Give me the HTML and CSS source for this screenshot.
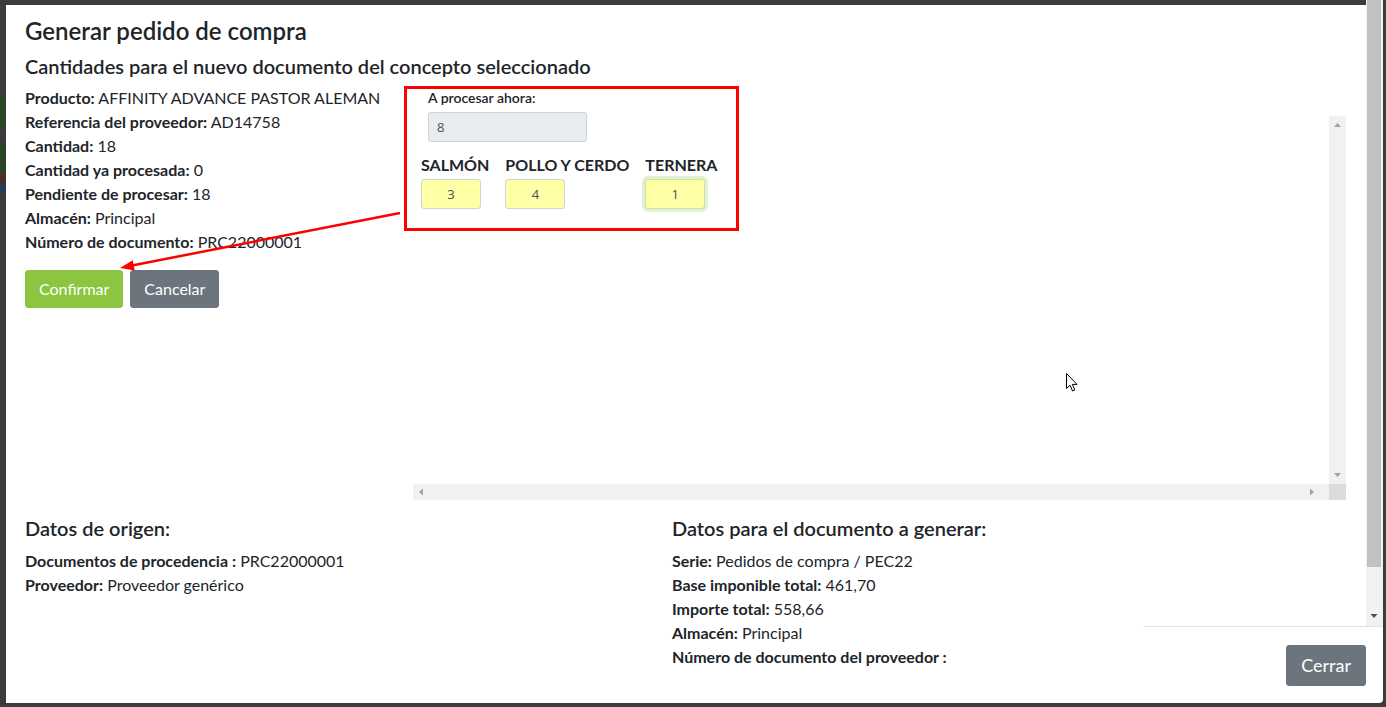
FILE: index.html
```html
<!DOCTYPE html>
<html lang="es">
<head>
    <meta charset="UTF-8">
    <title>Generar pedido de compra</title>
    <link rel="stylesheet" href="styles.css">
</head>
<body>
    <div class="backdrop-left">
        <div class="bd-block bd-green"></div>
        <div class="bd-block bd-green2"></div>
        <div class="bd-block bd-red"></div>
        <div class="bd-block bd-blue"></div>
    </div>

    <div class="modal">
        <div class="modal-body">
            <h4 class="modal-title">Generar pedido de compra</h4>
            <h5 class="section-title">Cantidades para el nuevo documento del concepto seleccionado</h5>

            <div class="top">
                <div class="info">
                    <p><strong>Producto:</strong> AFFINITY ADVANCE PASTOR ALEMAN</p>
                    <p><strong>Referencia del proveedor:</strong> AD14758</p>
                    <p><strong>Cantidad:</strong> 18</p>
                    <p><strong>Cantidad ya procesada:</strong> 0</p>
                    <p><strong>Pendiente de procesar:</strong> 18</p>
                    <p><strong>Almacén:</strong> Principal</p>
                    <p><strong>Número de documento:</strong> PRC22000001</p>

                    <div class="actions">
                        <button class="btn btn-confirm">Confirmar</button>
                        <button class="btn btn-cancel">Cancelar</button>
                    </div>
                </div>

                <div class="preview">
                    <div class="frame">
                        <div class="frame-view"></div>
                        <div class="frame-vbar">
                            <svg width="17" height="17" viewBox="0 0 17 17"><polygon points="5,11 12,11 8.5,7" fill="#a3a3a3"/></svg>
                            <svg width="17" height="17" viewBox="0 0 17 17"><polygon points="5,6 12,6 8.5,10" fill="#a3a3a3"/></svg>
                        </div>
                        <div class="frame-hbar">
                            <svg width="17" height="16" viewBox="0 0 17 16"><polygon points="10,4.5 10,11.5 6,8" fill="#a3a3a3"/></svg>
                            <svg width="17" height="16" viewBox="0 0 17 16"><polygon points="7,4.5 7,11.5 11,8" fill="#a3a3a3"/></svg>
                        </div>
                        <div class="frame-corner"></div>
                    </div>

                    <div class="mark-box">
                        <div class="now-group">
                            <label class="now-label">A procesar ahora:</label>
                            <input class="field field-readonly" type="text" value="8" readonly>
                        </div>
                        <div class="qty-row">
                            <div class="qty">
                                <span class="qty-label">SALMÓN</span>
                                <input class="field field-qty" type="text" value="3">
                            </div>
                            <div class="qty">
                                <span class="qty-label">POLLO Y CERDO</span>
                                <input class="field field-qty" type="text" value="4">
                            </div>
                            <div class="qty">
                                <span class="qty-label">TERNERA</span>
                                <input class="field field-qty field-focus" type="text" value="1">
                            </div>
                        </div>
                    </div>

                    <svg class="cursor" width="14" height="21" viewBox="0 0 14 21">
                        <path d="M1.5 1.5 L1.5 16.5 L5 13.2 L7.6 19 L9.8 18 L7.3 12.4 L12 12.4 Z" fill="#fff" stroke="#000" stroke-width="1" stroke-linejoin="round"/>
                    </svg>
                </div>

                <svg class="mark-arrow" width="300" height="80" viewBox="0 0 300 80">
                    <line x1="290" y1="13" x2="22" y2="65.5" stroke="#f00" stroke-width="2.5"/>
                    <polygon points="10,68 24.7,70.5 22.7,60.2" fill="#f00"/>
                </svg>
            </div>

            <div class="summary">
                <div class="summary-col">
                    <h5 class="section-title">Datos de origen:</h5>
                    <p><strong>Documentos de procedencia :</strong> PRC22000001</p>
                    <p><strong>Proveedor:</strong> Proveedor genérico</p>
                </div>
                <div class="summary-col">
                    <h5 class="section-title">Datos para el documento a generar:</h5>
                    <p><strong>Serie:</strong> Pedidos de compra / PEC22</p>
                    <p><strong>Base imponible total:</strong> 461,70</p>
                    <p><strong>Importe total:</strong> 558,66</p>
                    <p><strong>Almacén:</strong> Principal</p>
                    <p><strong>Número de documento del proveedor :</strong></p>
                </div>
            </div>
        </div>

        <div class="page-scroll">
            <div class="page-thumb"></div>
            <svg width="17" height="17" viewBox="0 0 17 17"><polygon points="4.5,6 11.5,6 8,10" fill="#505050"/></svg>
        </div>

        <div class="modal-footer">
            <button class="btn btn-close">Cerrar</button>
        </div>
    </div>
</body>
</html>
```

FILE: styles.css
```css
* {
    box-sizing: border-box;
}

body {
    margin: 0;
    height: 707px;
    overflow: hidden;
    display: flex;
    padding-right: 3px;
    background: #3c3c3c;
    font-family: 'Lato', 'Open Sans', sans-serif;
    font-size: 16px;
    line-height: 1.5;
    color: #212529;
}

/* page behind the overlay */
.backdrop-left {
    width: 6px;
    padding-top: 97px;
}

.bd-block {
    height: 30px;
}

.bd-green {
    background: #2c4527;
}

.bd-green2 {
    margin-top: 15px;
    background: #2b4428;
}

.bd-red {
    height: 12px;
    background: #4a2f30;
}

.bd-blue {
    height: 10px;
    background: #2b3a57;
}

/* modal */
.modal {
    flex: 1;
    height: 703px;
    display: grid;
    grid-template-columns: 1fr 17px;
    grid-template-rows: 626px 77px;
}

.modal-body {
    grid-row: 1 / 3;
    grid-column: 1;
    margin-top: 5px;
    background: #fff;
    padding: 12px 20px 0 19px;
}

.modal-title {
    margin: 0 0 8px 0;
    font-size: 24px;
    font-weight: 600;
    line-height: 1.2;
}

.section-title {
    margin: 0 0 8px 0;
    font-size: 20px;
    font-weight: 600;
    line-height: 1.2;
}

.summary .section-title {
    margin-bottom: 9px;
}

p {
    margin: 0;
}

strong {
    font-weight: 700;
}

.top {
    position: relative;
    display: flex;
}

.info {
    width: 379px;
}

.actions {
    display: flex;
    gap: 7px;
    margin-top: 16px;
}

.btn {
    font-family: inherit;
    font-size: 16px;
    line-height: 24px;
    padding: 6px 13px;
    border: 1px solid transparent;
    border-radius: 3px;
    color: #fff;
    cursor: pointer;
}

.btn-confirm {
    background: #8cc540;
    border-color: #8cc540;
}

.btn-cancel {
    background: #6c757d;
    border-color: #6c757d;
}

/* preview with scrollbars */
.preview {
    position: relative;
    flex: 1;
    padding: 30px 0 0 9px;
}

.frame {
    height: 384px;
    display: grid;
    grid-template-columns: 1fr 17px;
    grid-template-rows: 1fr 16px;
    background: #fff;
}

.frame-vbar {
    background: #f1f1f1;
    display: flex;
    flex-direction: column;
    justify-content: space-between;
}

.frame-hbar {
    background: #f1f1f1;
    display: flex;
    justify-content: space-between;
    padding: 0 9px 0 0;
}

.frame-corner {
    background: #dcdcdc;
}

.frame svg {
    display: block;
}

/* annotation */
.mark-box {
    position: absolute;
    left: 0;
    top: 0;
    width: 335px;
    height: 145px;
    border: 3px solid #f00;
    background: #fff;
    padding: 1px 14px 0 14px;
}

.now-group {
    padding-left: 7px;
}

.now-label {
    display: block;
    font-size: 14px;
    font-weight: 600;
    line-height: 16px;
}

.field {
    display: block;
    font-family: 'Open Sans', 'Lato', sans-serif;
    font-size: 13px;
    color: #495057;
    height: 30px;
    border: 1px solid #ced4da;
    border-radius: 3px;
    outline: none;
}

.field-readonly {
    width: 159px;
    margin-top: 6px;
    padding: 0 8px;
    background: #e9ecef;
}

.qty-row {
    display: flex;
    gap: 16px;
    margin-top: 13px;
}

.qty-label {
    display: block;
    font-size: 16px;
    font-weight: 700;
    line-height: 19px;
}

.field-qty {
    width: 60px;
    margin-top: 5px;
    text-align: center;
    background: #ffffa6;
    padding: 0;
}

.field-focus {
    border-color: #c9e2a6;
    box-shadow: 0 0 0 3px #e3f0d4;
}

.cursor {
    position: absolute;
    left: 661px;
    top: 286px;
}

.mark-arrow {
    position: absolute;
    left: 85px;
    top: 114px;
}

/* data summary */
.summary {
    display: grid;
    grid-template-columns: 647px 1fr;
    margin-top: 16px;
}

/* outer scrollbar */
.page-scroll {
    grid-row: 1;
    grid-column: 2;
    background: #f1f1f1;
    display: flex;
    flex-direction: column;
    padding-bottom: 1px;
}

.page-thumb {
    height: 567px;
    margin: 0 2px 0 1px;
    background: #c1c1c1;
}

.page-scroll svg {
    display: block;
    margin-top: auto;
}

.modal-footer {
    grid-row: 2;
    grid-column: 1 / 3;
    justify-self: end;
    width: 240px;
    background: #fff;
    border-top: 1px solid #dee2e6;
    border-bottom-right-radius: 4px;
    display: flex;
    justify-content: flex-end;
    align-items: flex-start;
    padding: 18px 17px 0 0;
}

.btn-close {
    font-size: 18px;
    line-height: 27px;
    padding: 6px 14px;
    background: #6c757d;
    border-color: #6c757d;
}
```
